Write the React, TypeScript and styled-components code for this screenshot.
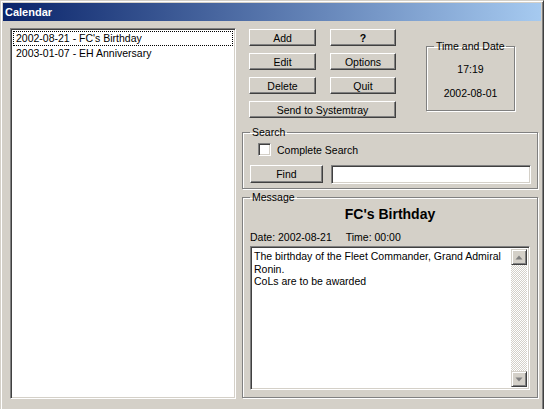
import { FC } from "react";
import styled, { createGlobalStyle } from "styled-components";

const Global = createGlobalStyle`
  html, body {
    margin: 0;
    padding: 0;
    background: #d4d0c8;
    overflow: hidden;
  }
  body {
    font-family: "Liberation Sans", Arial, sans-serif;
    font-size: 10.5px;
    color: #000;
  }
`;

interface Item {
  date: string;
  title: string;
}

const items: Item[] = [
  { date: "2002-08-21", title: "FC's Birthday" },
  { date: "2003-01-07", title: "EH Anniversary" },
];

const Window = styled.div`
  width: 544px;
  height: 412px;
  box-sizing: border-box;
  background: #d4d0c8;
  border-left: 1px solid #d4d0c8;
  border-top: 1px solid #d4d0c8;
  border-right: 1px solid #404040;
  box-shadow: inset 1px 1px #fff, inset -1px 0 #808080;
  padding: 2px 2px 0 2px;
  display: flex;
  flex-direction: column;
`;

const TitleBar = styled.div`
  height: 18px;
  background: linear-gradient(to right, #0a246a, #a6caf0);
  color: #fff;
  font-weight: bold;
  font-size: 11px;
  display: flex;
  align-items: center;
  padding-left: 2px;
`;

const Body = styled.div`
  display: flex;
  gap: 6px;
  padding: 7px 3px 0 7px;
`;

const Sunken = styled.div`
  box-sizing: border-box;
  background: #fff;
  border: 1px solid;
  border-color: #808080 #fff #fff #808080;
  box-shadow: inset 1px 1px #404040, inset -1px -1px #d4d0c8;
`;

const ListBox = styled(Sunken)`
  width: 227px;
  height: 371px;
  padding: 2px 2px;
`;

const ListItem = styled.div<{ $focused?: boolean }>`
  height: 13px;
  line-height: 13px;
  padding-left: 2px;
  border: 1px dotted ${(p) => (p.$focused ? "#000" : "transparent")};
  white-space: nowrap;
`;

const RightCol = styled.div`
  width: 296px;
  display: flex;
  flex-direction: column;
`;

const TopRow = styled.div`
  display: flex;
  align-items: flex-start;
`;

const ButtonGrid = styled.div`
  display: grid;
  grid-template-columns: 67px 66px;
  grid-auto-rows: 17px;
  column-gap: 14px;
  row-gap: 7px;
  margin: 1px 0 0 7px;
`;

const Button = styled.button<{ $span?: boolean }>`
  box-sizing: border-box;
  font: inherit;
  color: #000;
  background: #d4d0c8;
  border: 1px solid;
  border-color: #fff #404040 #404040 #fff;
  box-shadow: inset -1px -1px #808080;
  padding: 0;
  margin: 0;
  height: 17px;
  grid-column: ${(p) => (p.$span ? "1 / span 2" : "auto")};
`;

const Group = styled.fieldset`
  box-sizing: border-box;
  margin: 0;
  border: 1px solid #808080;
  box-shadow: 1px 1px #fff, inset 1px 1px #fff;
  padding: 0;
  min-width: 0;
`;

const Legend = styled.legend<{ $indent?: number }>`
  padding: 0 2px;
  margin-left: ${(p) => p.$indent ?? 0}px;
  line-height: 12px;
`;

const TimeGroup = styled(Group)`
  width: 89px;
  height: 71px;
  margin: 12px 0 0 30px;
  display: flex;
  flex-direction: column;
  align-items: center;
  padding-top: 11px;
  gap: 12px;
`;

const SearchGroup = styled(Group)`
  width: 296px;
  height: 63px;
  margin-top: 8px;
  padding: 5px 6px 0 7px;
`;

const CheckRow = styled.label`
  display: flex;
  align-items: center;
  gap: 6px;
  margin-left: 8px;
  height: 13px;
`;

const CheckBox = styled(Sunken)`
  width: 13px;
  height: 13px;
`;

const FindRow = styled.div`
  display: flex;
  gap: 8px;
  margin-top: 9px;
`;

const FindButton = styled(Button)`
  width: 73px;
  height: 18px;
`;

const TextField = styled(Sunken)`
  width: 201px;
  height: 19px;
`;

const MessageGroup = styled(Group)`
  width: 296px;
  height: 207px;
  margin-top: 2px;
  padding: 0 7px 0 7px;
  display: flex;
  flex-direction: column;
`;

const MsgTitle = styled.div`
  font-weight: bold;
  font-size: 14px;
  text-align: center;
  line-height: 16px;
  margin-top: 3px;
`;

const DateLine = styled.div`
  display: flex;
  gap: 14px;
  margin-top: 9px;
  line-height: 13px;
`;

const MemoBox = styled(Sunken)`
  margin-top: 2px;
  width: 280px;
  height: 144px;
  flex-shrink: 0;
  display: flex;
  padding: 2px;
`;

const MemoText = styled.div`
  flex: 1;
  padding: 1px 0 0 1px;
  line-height: 12.6px;
  white-space: pre-line;
`;

const ScrollBar = styled.div`
  width: 16px;
  display: flex;
  flex-direction: column;
  justify-content: space-between;
  background: repeating-conic-gradient(#d4d0c8 0 25%, #fff 0 50%) 0 0 / 2px 2px;
`;

const ScrollBtn = styled.div`
  box-sizing: border-box;
  width: 16px;
  height: 16px;
  background: #d4d0c8;
  border: 1px solid;
  border-color: #d4d0c8 #404040 #404040 #d4d0c8;
  box-shadow: inset 1px 1px #fff, inset -1px -1px #808080;
  display: flex;
  align-items: center;
  justify-content: center;
`;

const Arrow: FC<{ down?: boolean }> = ({ down }) => (
  <svg width="8" height="5" viewBox="0 0 8 5" style={{ transform: down ? "rotate(180deg)" : undefined }}>
    <path d="M4 0.5 L7.5 4.5 L0.5 4.5 Z" fill="#808080" />
  </svg>
);

export default function App() {
  return (
    <>
      <Global />
      <Window>
        <TitleBar>Calendar</TitleBar>
        <Body>
          <ListBox>
            {items.map((it, i) => (
              <ListItem key={it.date} $focused={i === 0}>
                {it.date} - {it.title}
              </ListItem>
            ))}
          </ListBox>
          <RightCol>
            <TopRow>
              <ButtonGrid>
                <Button>Add</Button>
                <Button style={{ fontWeight: "bold" }}>?</Button>
                <Button>Edit</Button>
                <Button>Options</Button>
                <Button>Delete</Button>
                <Button>Quit</Button>
                <Button $span>Send to Systemtray</Button>
              </ButtonGrid>
              <TimeGroup>
                <Legend $indent={7}>Time and Date</Legend>
                <span>17:19</span>
                <span>2002-08-01</span>
              </TimeGroup>
            </TopRow>
            <SearchGroup>
              <Legend>Search</Legend>
              <CheckRow>
                <CheckBox />
                Complete Search
              </CheckRow>
              <FindRow>
                <FindButton>Find</FindButton>
                <TextField />
              </FindRow>
            </SearchGroup>
            <MessageGroup>
              <Legend>Message</Legend>
              <MsgTitle>FC's Birthday</MsgTitle>
              <DateLine>
                <span>Date: 2002-08-21</span>
                <span>Time: 00:00</span>
              </DateLine>
              <MemoBox>
                <MemoText>
                  {"The birthday of the Fleet Commander, Grand Admiral\nRonin.\nCoLs are to be awarded"}
                </MemoText>
                <ScrollBar>
                  <ScrollBtn>
                    <Arrow />
                  </ScrollBtn>
                  <ScrollBtn>
                    <Arrow down />
                  </ScrollBtn>
                </ScrollBar>
              </MemoBox>
            </MessageGroup>
          </RightCol>
        </Body>
      </Window>
    </>
  );
}
